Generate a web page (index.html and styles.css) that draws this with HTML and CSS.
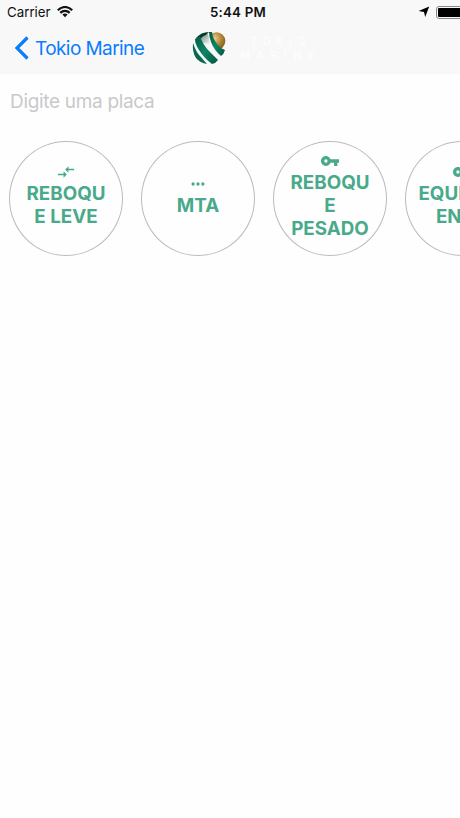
FILE: index.html
```
<!DOCTYPE html>
<html lang="pt-BR">
<head>
<meta charset="utf-8">
<title>Tokio Marine</title>
<link rel="stylesheet" href="styles.css">
</head>
<body>

<header class="header">
    <div class="status-bar">
        <div class="carrier">
            <span>Carrier</span>
            <svg class="wifi" width="16" height="12" viewBox="0 0 16 12">
                <path d="M.8 4.300C5-.1 11-.1 15.200 4.300M3.300 6.900C6.100 4.100 9.900 4.100 12.700 6.900" fill="none" stroke="#111" stroke-width="2.200"/>
                <path d="M5.400 8.600Q8 6.200 10.600 8.600L8 11.300z" fill="#111"/>
            </svg>
        </div>
        <div class="time">5:44 PM</div>
        <div class="battery-area">
            <svg width="12" height="12" viewBox="0 0 12 12"><path d="M11.200.6L7.200 11 6 6 .6 5z"/></svg>
            <div class="battery"><div class="battery-level"></div></div>
        </div>
    </div>
    <div class="nav-bar">
        <a class="back">
            <svg width="16" height="24" viewBox="0 0 16 24"><path d="M13.500 1.500L3 12l10.500 10.500" fill="none" stroke="#0a7cff" stroke-width="3.200"/></svg>
            <span>Tokio Marine</span>
        </a>
        <div class="brand">
            <svg class="globe" width="34" height="34" viewBox="0 0 34 34">
                <defs>
                    <radialGradient id="gold" cx=".4" cy=".35" r=".7">
                        <stop offset="0" stop-color="#e9cf95"/>
                        <stop offset=".5" stop-color="#b88a3c"/>
                        <stop offset="1" stop-color="#80581c"/>
                    </radialGradient>
                    <linearGradient id="green" x1="0" y1="0" x2="1" y2="1">
                        <stop offset="0" stop-color="#045c44"/>
                        <stop offset=".5" stop-color="#0b8765"/>
                        <stop offset="1" stop-color="#045440"/>
                    </linearGradient>
                    <linearGradient id="silver" x1="0" y1="0" x2="1" y2="1">
                        <stop offset="0" stop-color="#5f7f75"/>
                        <stop offset="1" stop-color="#f8f8f8"/>
                    </linearGradient>
                </defs>
                <circle cx="24.500" cy="10" r="8.800" fill="url(#gold)"/>
                <path d="M6 5L17 2 20 10 25 19 25 25Q17 20 10 12z" fill="#f8f8f8"/>
                <path d="M7 5L16 3 18 13 11 12z" fill="url(#silver)"/>
                <path d="M4 7Q9 1 17 1L14 4Q10 5 8 9z" fill="#03392b"/>
                <path d="M3 8L8 5Q11 14 17 20Q22 25 26 29Q24 32 20 33Q12 27 7 19Q3 13 3 8z" fill="url(#green)"/>
                <path d="M1 12Q4 21 8 25L15 33Q8 32 4 27Q0 21 1 12z" fill="#08694f"/>
                <path d="M17 1L20 1Q21 9 26 14Q29 18 33 19Q32 23 29 25Q22 19 19 11Q17 5 17 1z" fill="url(#green)"/>
            </svg>
            <div class="brand-name">
                <span>TOKIO</span>
                <span class="brand-wide">MARINE</span>
            </div>
        </div>
    </div>
</header>

<main>
    <input class="plate" type="text" placeholder="Digite uma placa">
    <div class="services">
        <div class="service">
            <svg class="icon" width="20" height="18" viewBox="0 0 24 22"><path d="M9.010 13H2v2h7.010v3L13 14l-3.990-4zm5.980-1V9H22V7h-7.010V4L11 8z"/></svg>
            <span>REBOQU<br>E LEVE</span>
        </div>
        <div class="service">
            <svg class="icon" width="18" height="18" viewBox="0 0 24 24"><circle cx="5.500" cy="12" r="2.200"/><circle cx="12" cy="12" r="2.200"/><circle cx="18.500" cy="12" r="2.200"/></svg>
            <span>MTA</span>
        </div>
        <div class="service">
            <svg class="icon" width="20" height="18" viewBox="0 0 24 22"><path d="M12.650 9C11.830 6.670 9.610 5 7 5c-3.310 0-6 2.690-6 6s2.690 6 6 6c2.610 0 4.830-1.670 5.650-4H17v4h4v-4h2V9zM7 13a2 2 0 1 1 0-4 2 2 0 0 1 0 4z"/></svg>
            <span>REBOQU<br>E<br>PESADO</span>
        </div>
        <div class="service">
            <svg class="icon" width="20" height="18" viewBox="0 0 24 22"><path d="M12.650 9C11.830 6.670 9.610 5 7 5c-3.310 0-6 2.690-6 6s2.690 6 6 6c2.610 0 4.830-1.670 5.650-4H17v4h4v-4h2V9zM7 13a2 2 0 1 1 0-4 2 2 0 0 1 0 4z"/></svg>
            <span>EQUIPAM<br>ENTO</span>
        </div>
    </div>
</main>

</body>
</html>
```
FILE: styles.css
```
* {
    box-sizing: border-box;
}

body {
    margin: 0;
    height: 818px;
    overflow: hidden;
    background-color: #fefefe;
    font-family: Inter, "Liberation Sans", sans-serif;
}

svg {
    display: block;
    flex-shrink: 0;
}

.header {
    height: 74px;
    overflow: hidden;
    background-color: #f8f8f8;
}

.status-bar {
    display: grid;
    grid-template-columns: 210px 208px 50px;
    align-items: center;
    height: 24px;
    font-size: 13.300px;
    color: #111;
}

.carrier {
    display: flex;
    align-items: center;
    gap: 6px;
    padding-left: 7px;
}

.time {
    font-weight: 600;
    letter-spacing: 0.2px;
}

.battery-area {
    display: flex;
    align-items: center;
    gap: 6px;
}

.battery {
    width: 29px;
    height: 13px;
    padding: 1px;
    border: 1px solid #888;
    border-radius: 3px;
    flex-shrink: 0;
}

.battery-level {
    height: 9px;
    border-radius: 1px;
    background-color: #000;
}

.nav-bar {
    display: flex;
    align-items: center;
    height: 48px;
}

.back {
    display: flex;
    align-items: center;
    gap: 5px;
    width: 192px;
    padding-left: 14px;
    font-size: 19px;
    letter-spacing: -0.58px;
    color: #0a7cff;
}

.brand {
    display: flex;
    align-items: center;
    gap: 14px;
}

.brand-name {
    display: flex;
    flex-direction: column;
    align-items: center;
    width: 82px;
    font-size: 10px;
    line-height: 14px;
    letter-spacing: 6px;
    color: #fff;
}

.brand-wide {
    letter-spacing: 7px;
}

.plate {
    display: block;
    width: 100%;
    height: 54px;
    padding: 0 10px;
    border: 0;
    background: none;
    font-family: inherit;
    font-size: 19px;
    letter-spacing: -0.32px;
}

.plate::placeholder {
    color: #c9c9cb;
}

.services {
    display: flex;
    gap: 18px;
    padding: 13px 9px;
    overflow: hidden;
}

.service {
    display: flex;
    flex-direction: column;
    align-items: center;
    justify-content: center;
    flex-shrink: 0;
    width: 114px;
    height: 115px;
    padding-bottom: 6px;
    border: 1px solid #bbb;
    border-radius: 50%;
    font-size: 18.800px;
    font-weight: 700;
    line-height: 23px;
    text-align: center;
    color: #49aa8b;
}

.icon {
    margin-bottom: 1px;
    fill: #49aa8b;
}
```
